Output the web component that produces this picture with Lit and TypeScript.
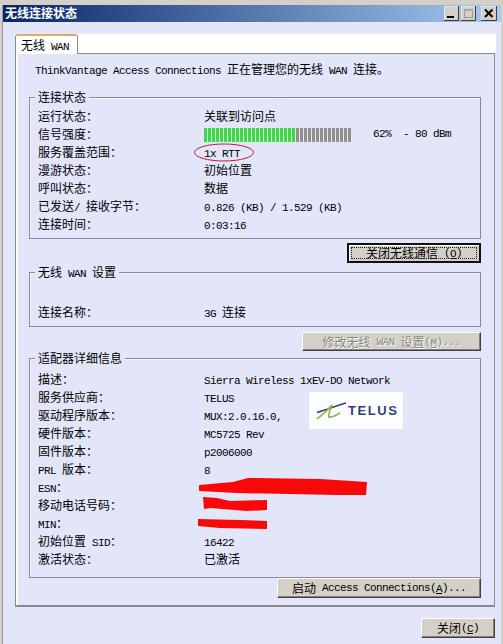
import { LitElement, html, css } from "lit";
import { customElement } from "lit/decorators.js";

const split = (s: string) =>
  s.split(/([\u2e80-\u9fff\uff00-\uffef\u3000-\u303f]+)/).filter(Boolean).map((p) =>
    /[\u2e80-\u9fff\uff00-\uffef\u3000-\u303f]/.test(p)
      ? html`<span class="cjk">${p}</span>`
      : html`<span class="lat">${p}</span>`
  );

const statusRows: [string, string][] = [
  ["运行状态：", "关联到访问点"],
  ["信号强度：", "__signal"],
  ["服务覆盖范围：", "1x RTT"],
  ["漫游状态：", "初始位置"],
  ["呼叫状态：", "数据"],
  ["已发送/ 接收字节：", "0.826 (KB) / 1.529 (KB)"],
  ["连接时间：", "0:03:16"],
];
const adapterRows: [string, string][] = [
  ["描述：", "Sierra Wireless 1xEV-DO Network"],
  ["服务供应商：", "TELUS"],
  ["驱动程序版本：", "MUX:2.0.16.0,"],
  ["硬件版本：", "MC5725 Rev"],
  ["固件版本：", "p2006000"],
  ["PRL 版本：", "8"],
  ["ESN：", ""],
  ["移动电话号码：", ""],
  ["MIN：", ""],
  ["初始位置 SID：", "16422"],
  ["激活状态：", "已激活"],
];

@customElement("app-root")
export class AppRoot extends LitElement {
  static styles = css`
    :host {
      display: block;
      width: 503px;
      height: 644px;
      overflow: hidden;
      color: #000;
      font-family: "Noto Sans CJK SC", sans-serif;
      font-size: 12px;
    }
    .cjk { font-family: "Noto Sans CJK SC", sans-serif; font-size: 12px; }
    .lat {
      font-family: "Liberation Mono", monospace;
      font-size: 11px;
      letter-spacing: -0.6px;
      white-space: pre;
    }
    .win {
      box-sizing: border-box;
      width: 503px;
      height: 644px;
      background: #e3e6f9;
      border: solid #d4d0c8;
      border-width: 5px 2px 0 2px;
      box-shadow: inset 1px 0 #9a9aa4;
      position: relative;
      display: flex;
      flex-direction: column;
    }
    .title {
      height: 17px;
      margin: 0 0 0 1px;
      background: linear-gradient(90deg, #0a246a, #a6caf0);
      display: flex;
      align-items: center;
      justify-content: space-between;
      color: #fff;
      padding: 0 4px 0 2px;
      line-height: 15px;
    }
    .title .name { margin-top: -2px; }
    .title .cjk { font-weight: 700; }
    .ctl { display: flex; gap: 2px; }
    .ctl svg { display: block; }
    .close-x { margin-left: 3px; }
    .body { padding: 12px 5px 0 13px; display: flex; flex-direction: column; }
    .strip { height: 19px; background: #fff; display: flex; }
    .tab {
      box-sizing: border-box;
      width: 63px;
      height: 20px;
      background: #fff;
      border: 1px solid #8a8a92;
      border-bottom: none;
      border-top: 2px solid #e8a860;
      border-radius: 3px 3px 0 0;
      padding-left: 5px;
      line-height: 17px;
      position: relative;
      z-index: 1;
    }
    .pane {
      box-sizing: border-box;
      width: 480px;
      height: 554px;
      border: 1px solid #8a8a92;
      border-bottom-width: 2px;
      box-shadow: inset 2px 0 #fff;
      padding: 6px 13px 0 13px;
      display: flex;
      flex-direction: column;
      align-items: stretch;
    }
    .intro { padding-left: 6px; line-height: 18px; height: 18px; white-space: nowrap; }
    .group {
      position: relative;
      border: 1px solid #8a8a92;
      box-shadow: inset 1px 1px #f4f4ff;
    }
    .legend {
      position: absolute;
      left: 5px;
      top: -10px;
      background: #e3e6f9;
      padding: 0 3px;
      line-height: 17px;
      white-space: nowrap;
    }
    .g1 { margin-top: 19px; padding: 9px 0 5px 8px; }
    .g2 { margin-top: 9px; padding: 30px 0 5px 8px; }
    .g3 { margin-top: 7px; padding: 11px 0 9px 8px; }
    .row {
      display: grid;
      grid-template-columns: 166px 1fr;
      height: 18px;
      line-height: 18px;
      white-space: nowrap;
    }
    .signal { display: flex; align-items: center; height: 18px; }
    .bars { display: flex; gap: 1px; height: 14px; margin-top: 1px; }
    .bars i { width: 3px; height: 100%; display: block; }
    .bars .on { background: #3bdc3b; }
    .bars .off { background: #8f8f8f; }
    .sigtext { margin-left: 22px; }
    .rtt { position: relative; height: 18px; }
    .oval { position: absolute; left: -11px; top: 0; pointer-events: none; }
    .overlay { position: absolute; left: 0; top: 0; pointer-events: none; }
    .logo {
      position: absolute;
      left: 279px;
      top: 33px;
      width: 94px;
      height: 37px;
      background: #fcfdff;
      display: flex;
      align-items: center;
      gap: 1px;
      padding-left: 7px;
      box-sizing: border-box;
    }
    .logo b {
      font-family: "Liberation Sans", sans-serif;
      font-size: 13px;
      font-weight: 700;
      letter-spacing: 1.6px;
      color: #2f4278;
    }
    .btnrow { display: flex; justify-content: flex-end; }
    .btn {
      box-sizing: border-box;
      height: 20px;
      background: #d4d0c8;
      border: 1px solid;
      border-color: #fff #404040 #404040 #fff;
      box-shadow: inset -1px -1px #808080;
      display: flex;
      align-items: center;
      justify-content: center;
      white-space: pre;
      line-height: 18px;
    }
    .btn u { text-underline-offset: 1px; }
    .b1 {
      width: 134px;
      height: 20px;
      margin-top: 4px;
      border: 2px solid #111;
      box-shadow: inset 1px 1px #fff;
      position: relative;
    }
    .b1::after {
      content: "";
      position: absolute;
      inset: 2px;
      border: 1px dotted #222;
    }
    .b2 { width: 179px; height: 19px; margin-top: 5px; color: #8a8880; text-shadow: 1px 1px #fff; }
    .b3 { width: 204px; }
    .close { width: 74px; }
    .foot { display: flex; justify-content: flex-end; margin-top: 11px; width: 480px; }
  `;

  private signal() {
    const bars = Array.from({ length: 37 }, (_, i) => i < 23);
    return html`<div class="signal">
      <div class="bars">${bars.map((on) => html`<i class=${on ? "on" : "off"}></i>`)}</div>
      <span class="lat sigtext">62%  - 80 dBm</span>
    </div>`;
  }

  private row(label: string, value: string) {
    let v: any = split(value);
    if (value === "__signal") v = this.signal();
    if (value === "1x RTT")
      v = html`<div class="rtt">
        ${split(value)}
        <svg class="oval" width="62" height="20" viewBox="0 0 62 20">
          <ellipse cx="31" cy="9.5" rx="29.5" ry="8.5" fill="none" stroke="#c2183a" stroke-width="1" />
        </svg>
      </div>`;
    return html`<div class="row"><div>${split(label)}</div><div>${v}</div></div>`;
  }

  render() {
    return html`<div class="win">
      <div class="title">
        <span class="name cjk">无线连接状态</span>
        <div class="ctl">
          <svg width="15" height="15" viewBox="0 0 15 15">
            <rect width="15" height="15" fill="#d4d0c8" />
            <path d="M0 14.5H14.5V0" fill="none" stroke="#404040" />
            <path d="M0 14V0H14" fill="none" stroke="#fff" />
            <rect x="3" y="10" width="7" height="2" fill="#000" />
          </svg>
          <svg width="15" height="15" viewBox="0 0 15 15">
            <rect width="15" height="15" fill="#d4d0c8" />
            <path d="M0 14.5H14.5V0" fill="none" stroke="#404040" />
            <path d="M0 14V0H14" fill="none" stroke="#fff" />
            <rect x="3.5" y="3.5" width="8" height="8" fill="none" stroke="#9a9a96" />
            <rect x="3" y="3" width="9" height="2" fill="#a8a8a4" />
          </svg>
          <svg class="close-x" width="16" height="15" viewBox="0 0 16 15">
            <rect width="16" height="15" fill="#d4d0c8" />
            <path d="M0 14.5H15.5V0" fill="none" stroke="#404040" />
            <path d="M0 14V0H15" fill="none" stroke="#fff" />
            <path d="M4 3.5L11.5 11M11.5 3.5L4 11" stroke="#000" stroke-width="2" />
          </svg>
        </div>
      </div>
      <div class="body">
        <div class="strip"><div class="tab">${split("无线 WAN")}</div></div>
        <div class="pane">
          <div class="intro">${split("ThinkVantage Access Connections 正在管理您的无线 WAN 连接。")}</div>

          <div class="group g1">
            <div class="legend">${split("连接状态")}</div>
            ${statusRows.map(([l, v]) => this.row(l, v))}
          </div>
          <div class="btnrow"><div class="btn b1">${split("关闭无线通信 (")}<u>${split("O")}</u>${split(")")}</div></div>

          <div class="group g2">
            <div class="legend">${split("无线 WAN 设置")}</div>
            ${this.row("连接名称：", "3G 连接")}
          </div>
          <div class="btnrow"><div class="btn b2">${split("修改无线 WAN 设置(")}<u>${split("M")}</u>${split(")...")}</div></div>

          <div class="group g3">
            <div class="legend">${split("适配器详细信息")}</div>
            ${adapterRows.map(([l, v]) => this.row(l, v))}
            <div class="logo">
              <svg width="31" height="22" viewBox="0 0 31 22">
                <path d="M1 12.5C10 10 20 6 30 3" fill="none" stroke="#2f4278" stroke-width="1.6" />
                <path d="M1 19C6 15 12 10 16 5C14 10 12 14 13 17C16 18 20 15 24 13" fill="none" stroke="#8db53c" stroke-width="1.6" />
              </svg>
              <b>TELUS</b>
            </div>
            <svg class="overlay" width="400" height="200" viewBox="30 358 400 200">
              <polygon fill="#f80808" points="199,484 233,481 248,477 320,478 367,481 366,494 337,494 237,492 199,490" />
              <polygon fill="#f80808" points="203,496 217,497 230,500 267,499 267,509 247,510 210,507 204,508" />
              <polygon fill="#f80808" points="198,518 240,519 267,520 267,528 220,527 198,525" />
            </svg>
          </div>
          <div class="btnrow"><div class="btn b3">${split("启动 Access Connections(")}<u>${split("A")}</u>${split(")...")}</div></div>
        </div>
        <div class="foot"><div class="btn close">${split("关闭(")}<u>${split("C")}</u>${split(")")}</div></div>
      </div>
    </div>`;
  }
}
